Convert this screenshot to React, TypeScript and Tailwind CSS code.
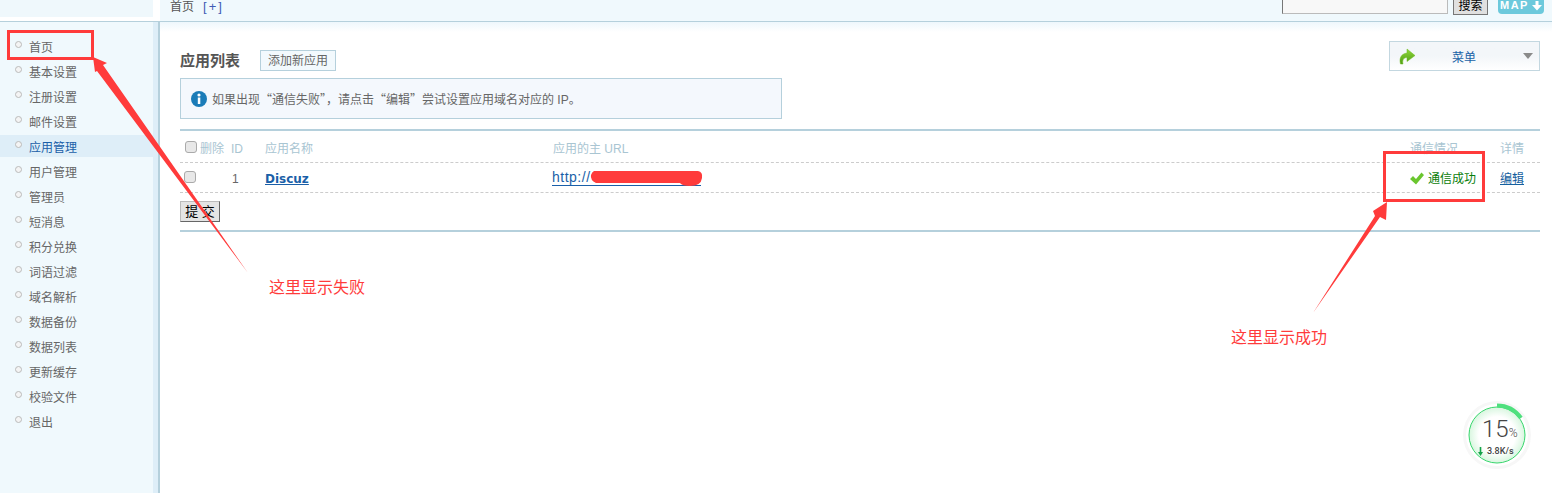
const menu = [
  "首页",
  "基本设置",
  "注册设置",
  "邮件设置",
  "应用管理",
  "用户管理",
  "管理员",
  "短消息",
  "积分兑换",
  "词语过滤",
  "域名解析",
  "数据备份",
  "数据列表",
  "更新缓存",
  "校验文件",
  "退出",
];

function Sidebar() {
  return (
    <aside className="w-[160px] shrink-0 flex border-r-2 border-[#b5d0dc] bg-[#deeef8]">
      <ul className="w-[153px] bg-[#f0f9fd] pt-[13px]">
        {menu.map((item) => (
          <li
            key={item}
            className={
              item === "应用管理"
                ? "h-[22px] mb-[3px] pl-[15px] flex items-center gap-[7px] bg-[#deeef8] text-[#1a5fa8]"
                : "h-[22px] mb-[3px] pl-[15px] flex items-center gap-[7px] text-[#666]"
            }
          >
            <span className="w-[7px] h-[7px] mb-[3px] rounded-full border-[1.5px] border-[#bbb] bg-[#f4f4f4]" />
            <span className="pt-[3px]">{item}</span>
          </li>
        ))}
      </ul>
    </aside>
  );
}

function Header() {
  return (
    <header className="h-[22px] shrink-0 flex border-b border-[#b5d0dc]">
      <div className="w-[153px] flex flex-col">
        <div className="h-[17px] bg-[#eff8fc]" />
      </div>
      <div className="w-[7px]" />
      <div className="flex-1 bg-[#f0f9fd] flex items-start pl-[10px]">
        <span className="text-[#555] leading-[14px]">首页</span>
        <span className="ml-[9px] text-[#3f5bb5] text-[13px] leading-[14px] tracking-[2px]">[+]</span>
        <div className="ml-auto h-[14px] w-[166px] bg-[#f8f8f8] border border-t-0 border-l-[#777] border-r-[#bbb] border-b-[#bbb]" />
        <button className="ml-[5px] h-[15px] w-[35px] bg-[#e0e0e0] border border-t-0 border-[#777] text-black flex items-start justify-center">
          <span className="leading-[12px]">搜索</span>
        </button>
        <div className="ml-[10px] mr-[8px] h-[14px] w-[46px] rounded-b-[4px] bg-[#6cc9dc] text-white text-[11px] font-bold leading-[11px] flex items-start justify-center gap-[3px] tracking-[1.5px]">
          <span>MAP</span>
          <svg width="10" height="10" viewBox="0 0 10 10" className="mt-[1px]">
            <path d="M3.5 0 H6.5 V4 H10 L5 9.5 L0 4 H3.5 Z" fill="white" />
          </svg>
        </div>
      </div>
    </header>
  );
}

function MenuBox() {
  return (
    <div className="w-[151px] h-[30px] border border-[#c3d7e0] bg-gradient-to-b from-[#f3f6f9] from-50% to-white flex items-center pl-[9px] pr-[6px]">
      <svg width="17" height="17" viewBox="0 0 17 17">
        <defs>
          <linearGradient id="menuArrow" x1="0" y1="0" x2="0" y2="1">
            <stop offset="0%" stopColor="#8fd63a" />
            <stop offset="100%" stopColor="#4f9f14" />
          </linearGradient>
        </defs>
        <path
          d="M1.5 16 C0 10 2 6 8 5 L8 1 L16 7.5 L8 13.5 L8 9.5 C5 9.5 3 11.5 4 16 Z"
          fill="url(#menuArrow)"
          stroke="#6cb81f"
          strokeWidth="0.5"
        />
      </svg>
      <span className="flex-1 text-center text-[#1a62a6] pr-[11px] pt-[3px]">菜单</span>
      <span className="w-0 h-0 border-x-[5px] border-x-transparent border-t-[6px] border-t-[#8a8a8a]" />
    </div>
  );
}

function InfoBox() {
  return (
    <div className="mt-[7px] w-[602px] h-[41px] border border-[#b5d0dc] bg-[#f4f8fd] flex items-center pl-[10px] gap-[5px] text-[#666]">
      <svg width="16" height="16" viewBox="0 0 16 16">
        <circle cx="8" cy="8" r="8" fill="#1b7cb8" />
        <circle cx="8" cy="4" r="1.6" fill="white" />
        <rect x="6.8" y="6.5" width="2.5" height="6.5" fill="white" />
      </svg>
      <span className="pt-[2px]">
        <span className="font-['Noto_Sans_CJK_SC',sans-serif]">如果出现“通信失败”，请点击“编辑”尝试设置应用域名对应的</span> IP。
      </span>
    </div>
  );
}

const tableCols = "grid grid-cols-[51px_34px_287px_858px_90px_40px]";

function Checkbox() {
  return <span className="inline-block w-[12px] h-[12px] rounded-[3px] border border-[#aaa] bg-[#e8e8e8]" />;
}

function AppTable() {
  return (
    <div className="mt-[10px] border-t-2 border-[#b5d0dc]">
      <div className={tableCols + " h-[32px] items-center border-b border-dashed border-[#ccc] text-[#a9c5d2]"}>
        <span className="flex items-center gap-[3px] pl-[5px]">
          <Checkbox />
          <span className="pt-[4px]">删除</span>
        </span>
        <span className="pt-[4px]">ID</span>
        <span className="pt-[4px]">应用名称</span>
        <span className="pt-[4px] pl-[1px]">应用的主 URL</span>
        <span className="pt-[4px]">通信情况</span>
        <span className="pt-[4px]">详情</span>
      </div>
      <div className={tableCols + " h-[30px] items-center border-b border-dashed border-[#ccc]"}>
        <span className="pl-[4px] flex items-center mb-[2px]">
          <Checkbox />
        </span>
        <span className="text-[#666] pl-[1px] pt-[2px]">1</span>
        <a className="text-[#1a5fa8] underline font-bold text-[12px] pt-[2px] font-['DejaVu_Sans',sans-serif]">Discuz</a>
        <a className="w-[149px] text-[#1a5fa8] text-[14px] tracking-[0.5px] border-b border-[#1a5fa8] leading-[15px] mt-[1px]">http://</a>
        <span className="flex items-center gap-[4px] text-[#0a7d0a] pt-[2px]">
          <svg width="14" height="13" viewBox="0 0 14 13">
            <path d="M0 7 L3 4 L6 7 L11.5 0.5 L14 3 L6 12.5 Z" fill="#6ac62e" />
          </svg>
          通信成功
        </span>
        <a className="text-[#15609e] underline pt-[2px]">编辑</a>
      </div>
      <button className="mt-[8px] block w-[40px] h-[21px] bg-[#e4e4e4] border border-[#bbb] border-b-[#666] border-r-[#666] text-black text-[13px] leading-[18px]">
        提 交
      </button>
      <div className="mt-[8px] border-t-2 border-[#b5d0dc]" />
    </div>
  );
}

function Speed() {
  return (
    <div className="absolute left-[1463px] top-[399px] w-[70px] h-[70px]">
      <svg width="70" height="70" viewBox="0 0 70 70" className="absolute inset-0">
        <defs>
          <radialGradient id="speedFill">
            <stop offset="65%" stopColor="#ffffff" />
            <stop offset="100%" stopColor="#d8f6df" />
          </radialGradient>
        </defs>
        <circle cx="34" cy="36" r="34" fill="#f7f7f7" />
        <circle cx="34" cy="36" r="31" fill="white" />
        <circle cx="34" cy="36" r="28" fill="url(#speedFill)" stroke="#37d66c" strokeWidth="1" />
        <path d="M 34 6.5 A 29.5 29.5 0 0 1 58 19" fill="none" stroke="#4fe07e" strokeWidth="4" />
      </svg>
      <div className="absolute left-[19px] top-[16px] flex items-baseline text-[#444] font-['Roboto',sans-serif] font-light">
        <span className="text-[24px] leading-[28px]">15</span>
        <span className="text-[12px]">%</span>
      </div>
      <div className="absolute left-[15px] top-[46px] flex items-center gap-[4px] text-[#444] text-[9px] leading-[12px] font-['Roboto',sans-serif] font-medium">
        <svg width="5" height="9" viewBox="0 0 5 9">
          <path d="M1.7 0 H3.3 V5 H5 L2.5 9 L0 5 H1.7 Z" fill="#16a34a" />
        </svg>
        <span>3.8K/s</span>
      </div>
    </div>
  );
}

function Annotations() {
  return (
    <>
      <div className="absolute left-[7px] top-[30px] w-[87px] h-[30px] border-[3px] border-[#ff3b3b]" />
      <div className="absolute left-[1383px] top-[151px] w-[102px] h-[51px] border-[3px] border-[#ff3b3b]" />
      <svg width="1552" height="493" className="absolute inset-0 pointer-events-none">
        <polygon points="93,57 107,63 103,65 248,273 97,71 95,72" fill="#ff3b3b" />
        <polygon points="1387,202 1386,220 1380,217 1313,313 1375,216 1373,211" fill="#ff3b3b" />
        <path
          d="M594 171 L698 171 Q703 172 702 178 Q701 186 690 186 Q682 186 680 183 L596 183 Q590 180 591 175 Q592 172 594 171 Z"
          fill="#ff3b3b"
        />
      </svg>
      <span className="absolute left-[269px] top-[278px] text-[16px] leading-[20px] text-[#ff3b3b]">这里显示失败</span>
      <span className="absolute left-[1231px] top-[328px] text-[16px] leading-[20px] text-[#ff3b3b]">这里显示成功</span>
    </>
  );
}

export default function App() {
  return (
    <div className="relative w-[1552px] h-[493px] overflow-hidden bg-white flex flex-col text-[12px] font-['Liberation_Sans','Noto_Sans_CJK_SC',sans-serif]">
      <Header />
      <div className="flex flex-1">
        <Sidebar />
        <main className="flex-1 pl-[20px] pr-[12px] bg-gradient-to-b from-[#eef7fc] to-white to-[10px]">
          <div className="flex items-start justify-between pt-[19px]">
            <div className="flex items-center pt-[9px] gap-[20px]">
              <h1 className="text-[15px] leading-[21px] font-bold text-[#555]">应用列表</h1>
              <button className="w-[76px] h-[21px] border border-[#b5d0dc] bg-[#f2f9fd] text-[#666]">添加新应用</button>
            </div>
            <MenuBox />
          </div>
          <InfoBox />
          <AppTable />
        </main>
      </div>
      <Annotations />
      <Speed />
    </div>
  );
}
